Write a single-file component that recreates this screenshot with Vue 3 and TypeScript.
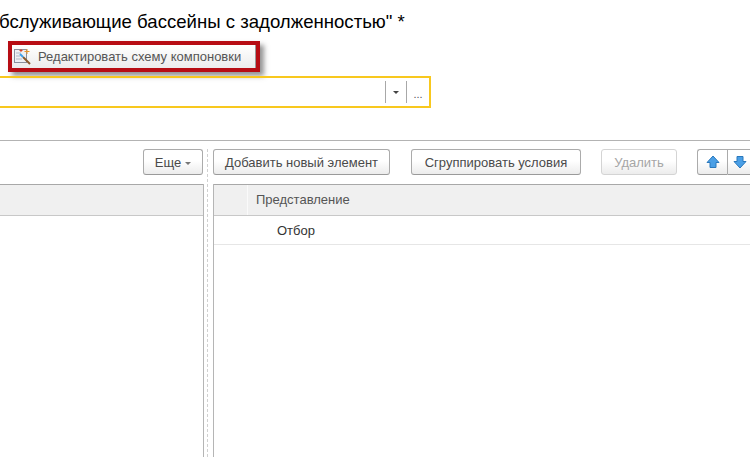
<script setup lang="ts">
const rightButtons = [
  { label: 'Добавить новый элемент', cls: 'b-add' },
  { label: 'Сгруппировать условия', cls: 'b-group' },
]
</script>

<template>
  <div class="page">
    <h1 class="title">бслуживающие бассейны с задолженностью" *</h1>
    <div class="tool">
      <div class="highlight">
        <svg class="wand" width="18" height="18" viewBox="0 0 18 18">
          <rect x="0.5" y="1.500" width="12" height="13" fill="#eef0f4" stroke="#8a8f9c" />
          <path d="M2 5h5M2 8h4M2 11h6" stroke="#b4bac6" />
          <path d="M9 9l7 7" stroke="#8a5a2c" stroke-width="2" />
          <path d="M6 6l3 3" stroke="#3fa0e8" stroke-width="2" />
          <path d="M13 1v5M10.500 3.500h5" stroke="#e8942a" />
          <path d="M7 1v3M5.500 2.500h3" stroke="#d8452a" />
        </svg>
        <span>Редактировать схему компоновки</span>
      </div>
    </div>
    <div class="field">
      <div class="spacer"></div>
      <div class="f-btn"><i class="caret dark"></i></div>
      <div class="f-btn dots">...</div>
    </div>
    <div class="rule"></div>
    <div class="panes">
      <section class="left">
        <div class="bar end">
          <button class="btn more">Еще<i class="caret"></i></button>
        </div>
        <div class="body body-left">
          <div class="head"></div>
        </div>
      </section>
      <div class="split"></div>
      <section class="right">
        <div class="bar">
          <button v-for="b in rightButtons" :key="b.label" class="btn" :class="b.cls">{{ b.label }}</button>
          <button class="btn b-del">Удалить</button>
          <div class="arrows">
            <button class="btn arrow">
              <svg width="14" height="14" viewBox="0 0 14 14"><path d="M7 1L13 7.500H10V12.500H4V7.500H1Z" fill="#4a9fe6" stroke="#2a78bc" /></svg>
            </button>
            <button class="btn arrow">
              <svg width="14" height="14" viewBox="0 0 14 14"><path d="M7 13L13 6.500H10V1.500H4V6.500H1Z" fill="#4a9fe6" stroke="#2a78bc" /></svg>
            </button>
          </div>
        </div>
        <div class="body body-right">
          <div class="head table-head">
            <div class="corner"></div>
            <div class="col">Представление</div>
          </div>
          <div class="row">Отбор</div>
        </div>
      </section>
    </div>
  </div>
</template>

<style>
html, body { margin: 0; background: #fff; }
</style>

<style scoped>
.page {
  width: 750px;
  height: 457px;
  overflow: hidden;
  background: #fff;
  font-family: "Liberation Sans", Arial, sans-serif;
  font-size: 13px;
  color: #4a4a4a;
}
.title {
  margin: 0 0 0 -1px;
  height: 41px;
  line-height: 43px;
  font-size: 18.600px;
  font-weight: 400;
  color: #000;
  white-space: nowrap;
}
.tool { padding-left: 8px; height: 35px; }
.highlight {
  box-sizing: border-box;
  width: 252px;
  height: 31px;
  border: 4px solid #b70d14;
  background: linear-gradient(#fff, #ececec);
  box-shadow: inset -1px 0 #9a9a9a, 4px 4px 5px rgba(90, 90, 90, 0.65);
  display: flex;
  align-items: center;
  padding-left: 2px;
  gap: 6px;
  color: #555;
  white-space: nowrap;
}
.wand { flex: none; }
.field {
  box-sizing: border-box;
  margin-left: -4px;
  width: 435px;
  height: 32px;
  border: 2px solid #f8c81e;
  display: flex;
  align-items: center;
}
.spacer { flex: 1; }
.f-btn {
  width: 21px;
  height: 22px;
  border-left: 1px solid #a8a8a8;
  display: flex;
  align-items: center;
  justify-content: center;
  box-sizing: border-box;
}
.dots { width: 23px; font-size: 11px; line-height: 22px; padding-top: 4px; color: #555; }
.caret {
  display: inline-block;
  width: 0;
  height: 0;
  border: 3px solid transparent;
  border-top: 3px solid #777;
  border-bottom: 0;
  vertical-align: middle;
  margin-left: 4px;
}
.caret.dark { border-top-color: #444; margin-left: 0; }
.rule { margin-top: 32px; height: 1px; background: #b3b3b3; }
.panes { display: flex; height: 316px; }
.left, .right { display: flex; flex-direction: column; }
.left { width: 204px; flex: none; }
.split { width: 0; margin: 8px 0 0 3px; border-left: 1px dashed #d0d0d0; flex: none; }
.right { flex: 1; min-width: 0; margin-left: 5px; }
.bar { display: flex; flex: none; height: 43px; padding-top: 8px; box-sizing: border-box; white-space: nowrap; }
.end { justify-content: flex-end; padding-right: 1px; }
.body { flex: 1; }
.body-left { border-right: 1px solid #b5b5b5; }
.body-right { border-left: 1px solid #b5b5b5; }
.btn {
  box-sizing: border-box;
  height: 26px;
  padding: 0;
  border: 1px solid #ababab;
  border-bottom-color: #9a9a9a;
  border-radius: 3px;
  background: linear-gradient(#fff 45%, #ececec);
  font: 13px "Liberation Sans", Arial, sans-serif;
  color: #4a4a4a;
  flex: none;
}
.more { width: 60px; }
.b-add { width: 177px; margin-right: 21px; }
.b-group { width: 170px; margin-right: 20px; }
.b-del { width: 76px; margin-right: 20px; color: #a6a6a6; border-color: #d4d4d4; }
.arrows { display: flex; flex: none; }
.arrow { width: 30px; display: flex; align-items: center; justify-content: center; }
.arrow:first-child { border-radius: 3px 0 0 3px; border-right: 0; }
.arrow:last-child { border-radius: 0 3px 3px 0; width: 40px; padding-right: 14px; }
.head {
  box-sizing: border-box;
  height: 32px;
  background: #f0f0f0;
  border-top: 1px solid #a8a8a8;
  border-bottom: 1px solid #c8c8c8;
}
.table-head { display: flex; }
.corner { width: 33px; border-right: 1px solid #fafafa; }
.col { padding-left: 8px; line-height: 30px; color: #555; }
.row {
  height: 28px;
  line-height: 29px;
  padding-left: 63px;
  color: #333;
  border-bottom: 1px solid #e6e6e6;
}
</style>
